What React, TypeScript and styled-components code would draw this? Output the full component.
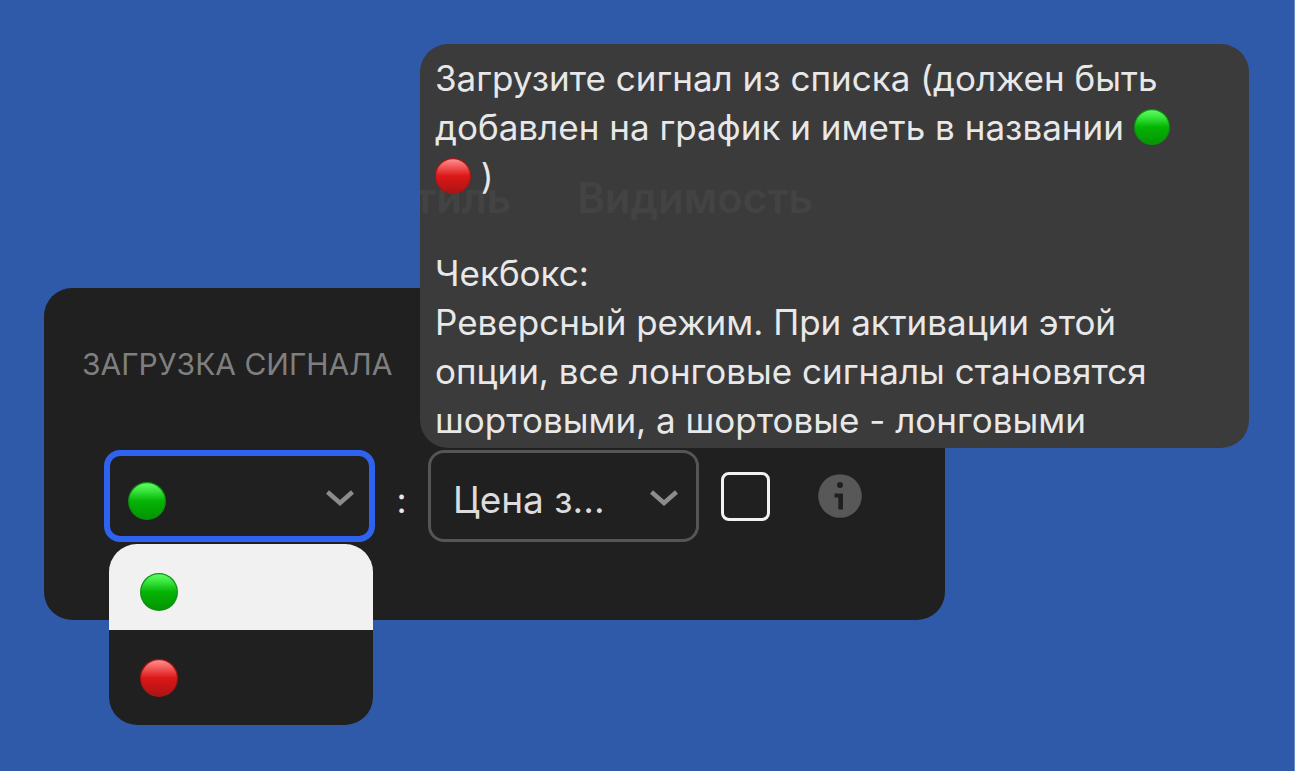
import React, { useId, useState } from "react";
import styled, { createGlobalStyle } from "styled-components";

const GlobalStyle = createGlobalStyle`
  *, *::before, *::after { box-sizing: border-box; }
  body {
    margin: 0;
    background: #2f5aaa;
    font-family: Inter, "Liberation Sans", sans-serif;
    color: #e8e8e8;
  }
`;

type Tone = "green" | "red";

const tones: Record<Tone, { rim: string; stops: string[] }> = {
  green: { rim: "#0d8f10", stops: ["#5dff62", "#38e43c", "#04b404", "#049404"] },
  red: { rim: "#a81616", stops: ["#ff8f8f", "#f25a5a", "#dc1717", "#ac1414"] },
};

const Page = styled.main`
  min-height: 100vh;
  padding: 44px 45px 46px 44px;
  border-right: 1px solid #6a88c4;
`;

const Scene = styled.div`
  position: relative;
  padding: 244px 304px 0 0;
`;

const Panel = styled.section`
  padding: 58px 38px 78px;
  border-radius: 28px;
  background: #202020;
`;

const Title = styled.h2`
  margin: 0 0 68px;
  font-size: 30px;
  line-height: 36px;
  font-weight: 400;
  color: #7f7f7f;
`;

const Controls = styled.div`
  display: flex;
  align-items: center;
  padding-left: 22px;
`;

const Field = styled.div`
  position: relative;
  flex: 0 0 auto;
  width: 271px;
`;

const Select = styled.select<{ $active?: boolean }>`
  display: block;
  appearance: none;
  width: 100%;
  height: 92px;
  padding: 6px 60px 0 ${(p) => (p.$active ? 20 : 22)}px;
  border: ${(p) => (p.$active ? "6px solid #2e63f0" : "3px solid #555555")};
  border-radius: 16px;
  outline: none;
  background: #202020;
  color: #dcdcdc;
  font-family: inherit;
  font-size: 37px;
`;

const Chevron = styled.svg`
  position: absolute;
  top: 38px;
  right: 20px;
  width: 30px;
  height: 20px;
  pointer-events: none;
`;

const FieldValue = styled.span`
  position: absolute;
  top: 32px;
  left: 24px;
  display: flex;
  pointer-events: none;
`;

const Menu = styled.ul`
  position: absolute;
  top: 94px;
  left: 5px;
  right: 2px;
  z-index: 1;
  margin: 0;
  padding: 0 0 9px;
  border-radius: 28px;
  overflow: hidden;
  list-style: none;
  background: #202020;
`;

const MenuItem = styled.li<{ $selected: boolean }>`
  display: flex;
  padding: 29px 31px 19px;
  background: ${(p) => (p.$selected ? "#f1f1f1" : "transparent")};
`;

const Colon = styled.span`
  width: 53px;
  padding-top: 8px;
  text-align: center;
  font-size: 35px;
  line-height: 44px;
`;

const Checkbox = styled.input`
  appearance: none;
  flex: 0 0 auto;
  width: 49px;
  height: 49px;
  margin: 0 0 0 22px;
  border: 3px solid #f1f1f1;
  border-radius: 8px;
  background: #202020;
`;

const InfoButton = styled.button`
  display: flex;
  flex: 0 0 auto;
  margin-left: 48px;
  padding: 0;
  border: 0;
  background: none;
`;

const Tooltip = styled.div`
  position: absolute;
  top: 0;
  left: 376px;
  right: 0;
  z-index: 2;
  padding: 10px 64px 3px 15px;
  border-radius: 28px;
  overflow: hidden;
  background: #3b3b3b;
  font-size: 35px;
  line-height: 49px;
`;

const Paragraph = styled.p`
  position: relative;
  margin: 0;
  & + & { margin-top: 48px; }
`;

const GhostTabs = styled.div`
  position: absolute;
  top: 129px;
  left: -36px;
  display: flex;
  gap: 66px;
  font-size: 42px;
  font-weight: 600;
  color: #434343;
`;

const BallSvg = styled.svg`
  display: inline-block;
  flex: 0 0 auto;
  vertical-align: -5px;
`;

function Ball({ tone, size = 38 }: { tone: Tone; size?: number }) {
  const id = useId();
  const { rim, stops } = tones[tone];
  return (
    <BallSvg width={size} height={size} viewBox="0 0 38 38" aria-hidden="true">
      <defs>
        <linearGradient id={id} x1="0" y1="0" x2="0" y2="1">
          <stop offset="0" stopColor={stops[0]} />
          <stop offset="0.22" stopColor={stops[1]} />
          <stop offset="0.5" stopColor={stops[2]} />
          <stop offset="1" stopColor={stops[3]} />
        </linearGradient>
      </defs>
      <circle cx="19" cy="19" r="19" fill={rim} />
      <circle cx="19" cy="19" r="17.8" fill={`url(#${id})`} />
    </BallSvg>
  );
}

function Arrow() {
  return (
    <Chevron viewBox="0 0 30 20" fill="none" aria-hidden="true">
      <path d="M2.500 4 15 15 27.500 4" stroke="#8c8c8c" strokeWidth="4.500" />
    </Chevron>
  );
}

export default function App() {
  const [tone, setTone] = useState<Tone>("green");
  const [reverse, setReverse] = useState(false);
  return (
    <>
      <GlobalStyle />
      <Page>
        <Scene>
          <Panel>
            <Title>ЗАГРУЗКА СИГНАЛА</Title>
            <Controls>
              <Field>
                <Select
                  $active
                  aria-label="Сигнал"
                  value={tone}
                  onChange={(e) => setTone(e.target.value as Tone)}
                >
                  <option value="green" aria-label="Зелёный" />
                  <option value="red" aria-label="Красный" />
                </Select>
                <FieldValue>
                  <Ball tone={tone} />
                </FieldValue>
                <Arrow />
                <Menu role="listbox" aria-label="Сигнал">
                  {(["green", "red"] as Tone[]).map((t) => (
                    <MenuItem
                      key={t}
                      role="option"
                      aria-selected={t === tone}
                      $selected={t === tone}
                      onClick={() => setTone(t)}
                    >
                      <Ball tone={t} />
                    </MenuItem>
                  ))}
                </Menu>
              </Field>
              <Colon>:</Colon>
              <Field>
                <Select aria-label="Источник">
                  <option>Цена з...</option>
                </Select>
                <Arrow />
              </Field>
              <Checkbox
                type="checkbox"
                aria-label="Реверсный режим"
                checked={reverse}
                onChange={(e) => setReverse(e.target.checked)}
              />
              <InfoButton type="button" aria-label="Подсказка">
                <svg width="44" height="44" viewBox="0 0 44 44" aria-hidden="true">
                  <circle cx="22" cy="22" r="21.800" fill="#585858" />
                  <circle cx="22" cy="11" r="3" fill="#202020" />
                  <path d="M16.500 19.500H25V35.500H20.300V23.500H16.500Z" fill="#202020" />
                </svg>
              </InfoButton>
            </Controls>
          </Panel>
          <Tooltip role="tooltip">
            <GhostTabs aria-hidden="true">
              <span>Стиль</span>
              <span>Видимость</span>
            </GhostTabs>
            <Paragraph>
              Загрузите сигнал из списка (должен быть добавлен на график и иметь в названии{" "}
              <Ball tone="green" size={36} /> <Ball tone="red" size={36} /> )
            </Paragraph>
            <Paragraph>
              Чекбокс:
              <br />
              Реверсный режим. При активации этой опции, все лонговые сигналы становятся
              шортовыми, а шортовые - лонговыми
            </Paragraph>
          </Tooltip>
        </Scene>
      </Page>
    </>
  );
}
